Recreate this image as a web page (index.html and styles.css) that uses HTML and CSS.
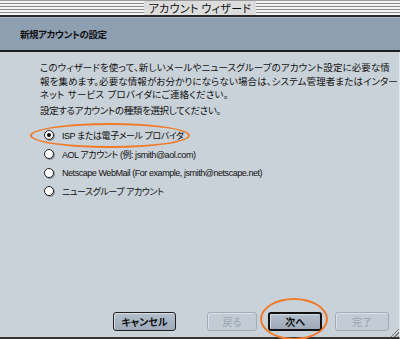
FILE: index.html
```html
<!DOCTYPE html>
<html lang="ja">
<head>
    <meta charset="UTF-8">
    <title>アカウント ウィザード</title>
    <link rel="stylesheet" href="styles.css">
</head>
<body>
    <div class="window">
        <div class="titlebar">
            <span class="title">アカウント ウィザード</span>
        </div>

        <div class="header">
            <h1>新規アカウントの設定</h1>
        </div>

        <div class="content">
            <p class="intro">
                <span class="line">このウィザードを使って、新しいメールやニュースグループのアカウント設定に必要な情</span>
                <span class="line">報を集めます。必要な情報がお分かりにならない場合は、システム管理者またはインター</span>
                <span class="line wide">ネット サービス プロバイダにご連絡ください。</span>
            </p>
            <p class="prompt">設定するアカウントの種類を選択してください。</p>

            <ul class="options">
                <li class="option"><span class="radio checked"></span>ISP または電子メール プロバイダ</li>
                <li class="option"><span class="radio"></span>AOL アカウント (例: jsmith@aol.com)</li>
                <li class="option"><span class="radio"></span>Netscape WebMail (For example, jsmith@netscape.net)</li>
                <li class="option"><span class="radio"></span>ニュースグループ アカウント</li>
            </ul>

            <div class="buttons">
                <button class="btn cancel">キャンセル</button>
                <button class="btn disabled back">戻る</button>
                <button class="btn default next">次へ</button>
                <button class="btn disabled done">完了</button>
            </div>
            <span class="grip"></span>
        </div>

        <!-- highlight marks -->
        <span class="mark mark-option"></span>
        <span class="mark mark-next"></span>
    </div>
</body>
</html>
```

FILE: styles.css
```css
* {
    margin: 0;
    padding: 0;
    box-sizing: border-box;
}

body {
    font-family: "Noto Sans CJK JP", "DejaVu Sans", sans-serif;
    font-feature-settings: "palt";
    background-color: #c9d1d9;
    color: #111;
}

.window {
    position: relative;
    width: 400px;
    height: 339px;
    display: flex;
    flex-direction: column;
    background-color: #c9d1d9;
    overflow: hidden;
}

.titlebar {
    height: 17px;
    display: flex;
    justify-content: center;
    align-items: flex-start;
    border-bottom: 2px solid #2a2a2a;
    border-top: 1px solid #9a9a9a;
    background: repeating-linear-gradient(to bottom, #f4f4f4 0, #f4f4f4 2px, #8c8c8c 2px, #8c8c8c 3px);
    background-size: 100% 14px;
    background-repeat: no-repeat;
    background-color: #e8e8e8;
}

.title {
    height: 14px;
    padding: 0 5px;
    white-space: nowrap;
    background-color: #dcdcdc;
    font-size: 11px;
    line-height: 14px;
    letter-spacing: 0.3px;
    color: #111;
}

.header {
    height: 35px;
    padding-left: 20px;
    display: flex;
    align-items: center;
    background-color: #8e9fb1;
    border-top: 1px solid #a9b7c5;
    border-bottom: 2px solid #1e1e1e;
}

.header h1 {
    font-size: 9.5px;
    font-weight: bold;
    letter-spacing: -0.4px;
    color: #111;
}

.content {
    position: relative;
    flex: 1;
    display: flex;
    flex-direction: column;
    padding: 9px 0 0 40px;
    border-bottom: 2px solid #333;
    border-right: 1px solid #e2e6ea;
    font-size: 9.5px;
}

.intro .line {
    display: block;
    white-space: nowrap;
    line-height: 13.5px;
    letter-spacing: 0.1px;
}

.intro .wide {
    word-spacing: 1px;
    letter-spacing: 0.2px;
}

.prompt {
    line-height: 13.5px;
    margin-top: 2px;
    letter-spacing: -0.35px;
}

.options {
    list-style: none;
    margin-top: 9px;
}

.option {
    height: 18.7px;
    display: flex;
    align-items: center;
    white-space: nowrap;
    font-family: "Liberation Sans", "Noto Sans CJK JP", sans-serif;
    font-size: 9px;
    letter-spacing: -0.45px;
}

.radio {
    width: 10px;
    height: 10px;
    margin: 0 8px 0 4px;
    border: 1px solid #222;
    border-radius: 50%;
    background-color: #fff;
    box-shadow: 1px 1px 0 #8a949e;
    display: flex;
    align-items: center;
    justify-content: center;
}

.radio.checked::after {
    content: "";
    width: 4px;
    height: 4px;
    border-radius: 50%;
    background-color: #111;
}

.buttons {
    margin-top: auto;
    margin-bottom: 6px;
    display: flex;
    align-items: center;
    padding-left: 73px;
}

.btn {
    flex: none;
    height: 19px;
    padding: 0;
    font-family: inherit;
    font-feature-settings: "palt";
    font-size: 10px;
    font-weight: bold;
    color: #111;
    background: linear-gradient(to bottom, #b4bfcb, #9eaaba);
    border: 1px solid #222;
    border-radius: 3px;
    box-shadow: inset 1px 1px 0 #d6dde5;
}

.cancel {
    width: 63px;
}

.back {
    width: 50px;
    margin-left: 31px;
}

.next {
    width: 54px;
    margin-left: 11px;
}

.done {
    width: 54px;
    margin-left: 13px;
}

.btn.default {
    border: 2px solid #111;
}

.btn.disabled {
    background: #c3ccd5;
    border-color: #a2acb7;
    color: #9aa4ae;
    font-weight: normal;
    box-shadow: inset 1px 1px 0 #dde2e8;
}

.grip {
    position: absolute;
    right: 0;
    bottom: 0;
    width: 9px;
    height: 9px;
    background: repeating-linear-gradient(135deg, transparent 0, transparent 1.5px, #777 1.5px, #777 2.5px);
    clip-path: polygon(100% 0, 100% 100%, 0 100%);
}

.mark {
    position: absolute;
    border: 2px solid #f07a28;
    border-radius: 50%;
}

.mark-option {
    left: 30px;
    top: 123px;
    width: 160px;
    height: 25px;
}

.mark-next {
    left: 260px;
    top: 298px;
    width: 68px;
    height: 42px;
}
```
